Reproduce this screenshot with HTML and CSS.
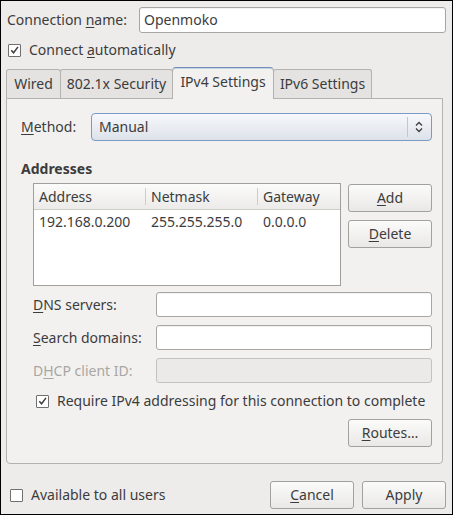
FILE: index.html
```html
<!DOCTYPE html>
<html>
<head>
<meta charset="utf-8">
<link rel="stylesheet" href="styles.css">
</head>
<body>
<div class="window">
  <div class="name-row">
    <span class="label">Connection <u>n</u>ame:</span>
    <div class="entry"><span>Openmoko</span></div>
  </div>
  <div class="check-row top-check">
    <span class="check checked"><svg viewBox="0 0 12 12" width="12" height="12"><path d="M2.5 6.2 L5 9 L9.8 2.6" fill="none" stroke="#3c3c3c" stroke-width="1.6"/></svg></span>
    <span>Connect <u>a</u>utomatically</span>
  </div>

  <div class="notebook">
    <div class="tabs">
      <div class="tab tab-wired">Wired</div>
      <div class="tab tab-sec">802.1x Security</div>
      <div class="tab tab-v4 active">IPv4 Settings</div>
      <div class="tab tab-v6">IPv6 Settings</div>
    </div>
    <div class="panel">
      <div class="method-row">
        <span class="label"><u>M</u>ethod:</span>
        <div class="combo">
          <span class="combo-text">Manual</span>
          <span class="combo-sep"></span>
          <svg class="combo-arrows" viewBox="0 0 8 12" width="8" height="12"><path d="M1 4.5 L4 1.5 L7 4.5 M1 7.5 L4 10.5 L7 7.5" fill="none" stroke="#3c3c3c" stroke-width="1.3"/></svg>
        </div>
      </div>
      <div class="heading">Addresses</div>
      <div class="addr-block">
        <div class="table">
          <div class="thead">
            <div class="th c1">Address</div>
            <div class="th c2">Netmask</div>
            <div class="th c3">Gateway</div>
          </div>
          <div class="tr">
            <div class="td c1">192.168.0.200</div>
            <div class="td c2">255.255.255.0</div>
            <div class="td c3">0.0.0.0</div>
          </div>
        </div>
        <div class="side-buttons">
          <div class="btn"><u>A</u>dd</div>
          <div class="btn"><u>D</u>elete</div>
        </div>
      </div>
      <div class="form-row dns">
        <span class="label"><u>D</u>NS servers:</span>
        <div class="entry"></div>
      </div>
      <div class="form-row">
        <span class="label"><u>S</u>earch domains:</span>
        <div class="entry"></div>
      </div>
      <div class="form-row disabled">
        <span class="label">D<u>H</u>CP client ID:</span>
        <div class="entry"></div>
      </div>
      <div class="check-row require">
        <span class="check checked"><svg viewBox="0 0 12 12" width="12" height="12"><path d="M2.5 6.2 L5 9 L9.8 2.6" fill="none" stroke="#3c3c3c" stroke-width="1.6"/></svg></span>
        <span>Require IPv4 addressing for this connection to complete</span>
      </div>
      <div class="routes-row">
        <div class="btn"><u>R</u>outes…</div>
      </div>
    </div>
  </div>

  <div class="bottom-row">
    <div class="check-row avail">
      <span class="check"></span>
      <span>Available to all users</span>
    </div>
    <div class="bottom-buttons">
      <div class="btn"><u>C</u>ancel</div>
      <div class="btn">Apply</div>
    </div>
  </div>
</div>
</body>
</html>
```
FILE: styles.css
```css
html, body {
  margin: 0;
  padding: 0;
  background: #edeceb;
}
.window {
  width: 453px;
  height: 515px;
  box-sizing: border-box;
  border: 1px solid #000;
  background: #edeceb;
  font-family: "Noto Sans", "DejaVu Sans", sans-serif;
  font-size: 14px;
  line-height: 18px;
  color: #3c3c3c;
  overflow: hidden;
}
u { text-decoration: underline; text-underline-offset: 2px; }

.name-row {
  display: grid;
  grid-template-columns: 132px 1fr;
  align-items: center;
  height: 26px;
  margin: 6px 6px 0 6px;
}
.entry {
  height: 25px;
  box-sizing: border-box;
  border: 1px solid #a7a6a4;
  border-radius: 3px;
  background: #fff;
  display: flex;
  align-items: center;
  padding-left: 4px;
  box-shadow: inset 0 1px 1px rgba(0,0,0,0.06);
}
.name-row .entry { height: 26px; }

.check-row {
  display: flex;
  align-items: center;
  gap: 8px;
  height: 20px;
}
.top-check { margin: 7px 0 0 7px; }
.check {
  width: 13px;
  height: 13px;
  box-sizing: border-box;
  border: 1px solid #6f6f6f;
  background: #fff;
  border-radius: 1px;
  display: flex;
  align-items: center;
  justify-content: center;
  flex: none;
}
.check svg { display: block; }

.notebook {
  margin: 7px 0 0 5px;
  width: 437px;
}
.tabs {
  display: flex;
  align-items: flex-end;
  height: 31px;
  position: relative;
  z-index: 1;
}
.tab {
  height: 29px;
  box-sizing: border-box;
  border: 1px solid #b4b2af;
  border-bottom: none;
  border-radius: 3px 3px 0 0;
  background: #e4e3e1;
  display: flex;
  align-items: center;
  justify-content: center;
  margin-right: -1px;
}
.tab-wired { width: 55px; }
.tab-sec { width: 113px; }
.tab-v4 { width: 102px; }
.tab-v6 { width: 99px; }
.tab.active {
  height: 32px;
  margin-bottom: -1px;
  background: #f2f1f0;
  border-color: #b4b2af;
  border-top: 1px solid #6f8fb8;
  border-top-left-radius: 4px;
  border-top-right-radius: 4px;
  padding-bottom: 3px;
  box-shadow: inset 0 1px 0 #c5d4e6;
}
.panel {
  height: 366px;
  box-sizing: border-box;
  border: 1px solid #b4b2af;
  border-radius: 0 0 4px 4px;
  background: #f2f1f0;
  padding: 0 10px 0 14px;
}
.method-row {
  display: grid;
  grid-template-columns: 70px 1fr;
  align-items: center;
  margin-top: 14px;
  height: 28px;
}
.combo {
  height: 28px;
  box-sizing: border-box;
  border: 1px solid #7b9bc6;
  border-radius: 4px;
  background: linear-gradient(#f6f8fb, #dde2ea);
  display: flex;
  align-items: center;
  padding-left: 7px;
}
.combo-text { flex: 1; }
.combo-sep {
  width: 1px;
  height: 20px;
  background: #c2c7cf;
  margin-right: 7px;
}
.combo-arrows { margin-right: 8px; display: block; }

.heading {
  font-weight: bold;
  margin-top: 19px;
  line-height: 18px;
  height: 18px;
}
.addr-block {
  display: flex;
  margin: 5px 0 0 12px;
  gap: 7px;
}
.table {
  width: 309px;
  height: 103px;
  box-sizing: border-box;
  border: 1px solid #a19f9c;
  background: #fff;
}
.thead {
  display: flex;
  height: 25px;
  background: linear-gradient(#fbfbfa, #ecebea);
  border-bottom: 1px solid #cfcdca;
}
.th {
  display: flex;
  align-items: center;
  padding-left: 5px;
  box-sizing: border-box;
}
.th.c1, .th.c2 {
  background: linear-gradient(#cfcdca, #cfcdca) right center / 1px 17px no-repeat;
}
.c1 { width: 112px; }
.c2 { width: 112px; }
.c3 { flex: 1; }
.tr {
  display: flex;
  height: 24px;
  align-items: center;
}
.td { padding-left: 5px; box-sizing: border-box; }

.side-buttons {
  display: flex;
  flex-direction: column;
  gap: 8px;
  width: 84px;
  padding-top: 1px;
}
.btn {
  height: 28px;
  width: 84px;
  box-sizing: border-box;
  border: 1px solid #a3a19e;
  border-radius: 3px;
  background: linear-gradient(#fbfbfa, #e9e8e6);
  display: flex;
  align-items: center;
  justify-content: center;
}

.form-row {
  display: grid;
  grid-template-columns: 123px 1fr;
  align-items: center;
  margin-left: 12px;
  margin-top: 8px;
}
.form-row.dns { margin-top: 6px; }
.form-row.disabled .label { color: #a8a6a3; }
.form-row.disabled .entry {
  background: #ebeae8;
  border-color: #c4c2bf;
  box-shadow: none;
}
.require { margin: 8px 0 0 15px; }
.routes-row {
  display: flex;
  justify-content: flex-end;
  margin-top: 8px;
}

.bottom-row {
  display: flex;
  align-items: center;
  justify-content: space-between;
  margin: 17px 6px 0 9px;
}
.bottom-buttons {
  display: flex;
  gap: 8px;
}
```
